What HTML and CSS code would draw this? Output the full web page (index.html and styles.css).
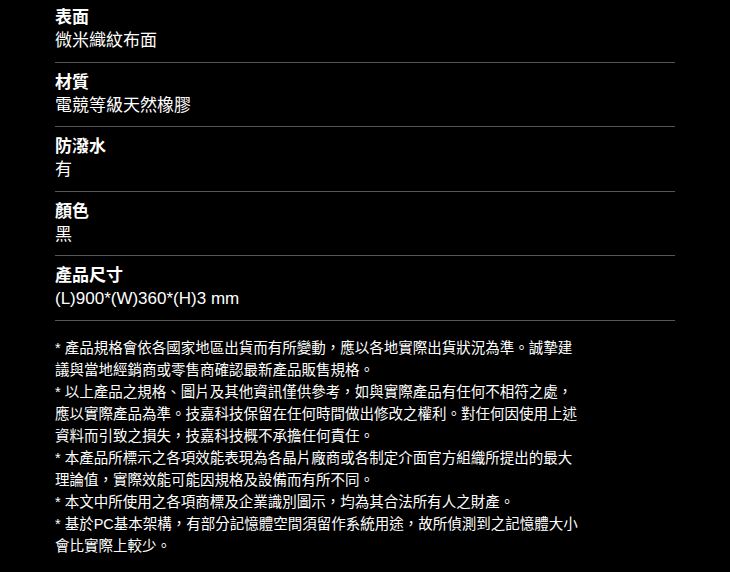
FILE: index.html
```html
<!DOCTYPE html>
<html lang="zh-Hant">
<head>
  <meta charset="UTF-8">
  <title>規格</title>
  <link rel="stylesheet" href="styles.css">
</head>
<body>

  <div class="specs">
    <div class="spec">
      <h4>表面</h4>
      <p>微米織紋布面</p>
    </div>
    <div class="spec">
      <h4>材質</h4>
      <p>電競等級天然橡膠</p>
    </div>
    <div class="spec">
      <h4>防潑水</h4>
      <p>有</p>
    </div>
    <div class="spec">
      <h4>顏色</h4>
      <p>黑</p>
    </div>
    <div class="spec">
      <h4>產品尺寸</h4>
      <p>(L)900*(W)360*(H)3 mm</p>
    </div>
  </div>

  <div class="notes">
    <p>* 產品規格會依各國家地區出貨而有所變動，應以各地實際出貨狀況為準。誠摯建議與當地經銷商或零售商確認最新產品販售規格。</p>
    <p>* 以上產品之規格、圖片及其他資訊僅供參考，如與實際產品有任何不相符之處，應以實際產品為準。技嘉科技保留在任何時間做出修改之權利。對任何因使用上述資料而引致之損失，技嘉科技概不承擔任何責任。</p>
    <p>* 本產品所標示之各項效能表現為各晶片廠商或各制定介面官方組織所提出的最大理論值，實際效能可能因規格及設備而有所不同。</p>
    <p>* 本文中所使用之各項商標及企業識別圖示，均為其合法所有人之財產。</p>
    <p>* 基於PC基本架構，有部分記憶體空間須留作系統用途，故所偵測到之記憶體大小會比實際上較少。</p>
  </div>

</body>
</html>
```

FILE: styles.css
```css
* {
  box-sizing: border-box;
}

body {
  margin: 0;
  padding: 0 55px;
  background: #000;
  color: #fff;
  font-family: "Liberation Sans", "Noto Sans CJK TC", sans-serif;
}

.specs {
  width: 620px;
}

.spec {
  padding: 8px 0 9.5px;
  border-bottom: 1px solid #555;
}

.spec:first-child {
  padding-top: 6px;
}

.spec h4,
.spec p {
  margin: 0;
  font-size: 17px;
  line-height: 23px;
}

.spec h4 {
  font-weight: 700;
}

.spec p {
  font-weight: 400;
}

.notes {
  width: 527px;
  margin-top: 16px;
}

.notes p {
  margin: 0;
  font-size: 14.5px;
  line-height: 22px;
}
```
